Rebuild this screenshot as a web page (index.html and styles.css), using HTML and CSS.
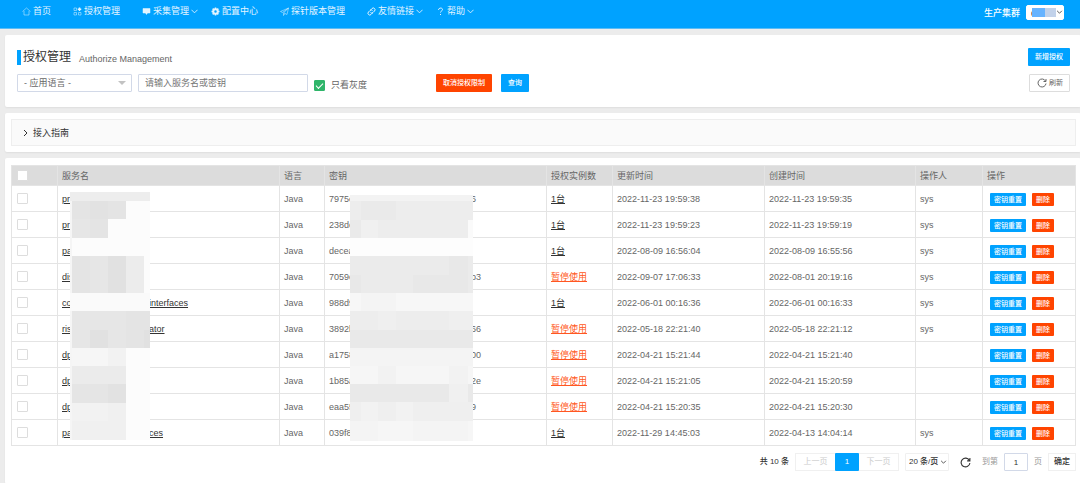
FILE: index.html
```
<!DOCTYPE html>
<html lang="zh-CN">
<head>
<meta charset="utf-8">
<title>授权管理</title>
<meta name="viewport" content="width=device-width, initial-scale=1">
<link rel="stylesheet" href="styles.css">
</head>
<body>
<header class="topbar">
  <nav class="nav">
    <a href="#"><svg class="icon" viewBox="0 0 18 18"><path d="M1 9 9 2l8 7M4 8v8h10V8"/></svg>首页</a>
    <a href="#"><svg class="icon" viewBox="0 0 18 18"><path d="M2 2h5v5H2zM2 11h5v5H2zM11 11h5v5h-5z"/><path class="strong" d="M13 1v7M9.500 4.500h7"/></svg>授权管理</a>
    <a href="#"><svg class="icon" viewBox="0 0 18 18"><path class="solid" d="M2 3h14v9h-5l-2 3-2-3H2z"/></svg>采集管理<svg class="caret" viewBox="0 0 16 10"><path d="m1 1 7 7 7-7"/></svg></a>
    <a href="#"><svg class="icon" viewBox="0 0 18 18"><circle class="gear" cx="9" cy="9" r="4.500"/><path class="strong" d="M9 1v3M9 14v3M1 9h3M14 9h3M3.300 3.300l2.200 2.200M12.500 12.500l2.200 2.200M3.300 14.700l2.200-2.200M12.500 5.500l2.200-2.200"/></svg>配置中心</a>
    <a href="#"><svg class="icon" viewBox="0 0 18 18"><path d="M17 2 1 9l4 2L17 2l-3 13-6-3M17 2 7 12v5l3-4"/></svg>探针版本管理</a>
    <a href="#"><svg class="icon" viewBox="0 0 18 18"><path class="medium" d="m7 6 3-3a3.500 3.500 0 0 1 5 5l-3 3a3.500 3.500 0 0 1-5 0M11 12l-3 3a3.500 3.500 0 0 1-5-5l3-3a3.500 3.500 0 0 1 5 0"/></svg>友情链接<svg class="caret" viewBox="0 0 16 10"><path d="m1 1 7 7 7-7"/></svg></a>
    <a href="#"><svg class="icon" viewBox="0 0 18 18"><path class="medium" d="M5 6c0-5 8-5 8-1 0 3-4 3-4 6M9 14v2"/></svg>帮助<svg class="caret" viewBox="0 0 16 10"><path d="m1 1 7 7 7-7"/></svg></a>
  </nav>
  <div class="cluster">
    <label for="cluster">生产集群</label>
    <span class="select-box cluster-box">
      <select id="cluster"><option>d</option></select>
      <svg class="mask" viewBox="0 0 24 10"><path fill="#66b3ff" d="M0 0h13v9H0z"/><path fill="#c2d2ea" d="M13 0h11v9H13z"/></svg>
      <svg class="arrow" viewBox="0 0 16 10"><path d="m2 2 6 6 6-6"/></svg>
    </span>
  </div>
</header>

<main class="page">
  <section class="card search-card">
    <div class="heading">
      <h1>授权管理</h1><small>Authorize Management</small>
      <button type="button" class="btn blue push">新增授权</button>
    </div>
    <form class="filters">
      <span class="select-box lang-box">
        <select aria-label="应用语言"><option>- 应用语言 -</option></select>
        <svg class="triangle" viewBox="0 0 8 4"><path d="M0 0h8L4 4z"/></svg>
      </span>
      <input class="keyword" type="text" aria-label="服务名或密钥" placeholder="请输入服务名或密钥">
      <label class="gray-only"><input type="checkbox" class="check" checked>只看灰度</label>
      <button type="button" class="btn red cancel">取消授权限制</button>
      <button type="button" class="btn blue">查询</button>
      <button type="button" class="btn plain push"><svg class="refresh" viewBox="0 0 20 20"><path d="M17 6a8 8 0 1 0 1 5M18 2v5h-5"/></svg>刷新</button>
    </form>
  </section>

  <section class="card guide-card">
    <button type="button" class="guide"><svg viewBox="0 0 10 16"><path d="m2 2 6 6-6 6"/></svg>接入指南</button>
  </section>

  <section class="card list-card">
    <table class="list">
      <colgroup><col class="c-check"><col class="c-name"><col class="c-lang"><col class="c-key"><col class="c-count"><col class="c-updated"><col class="c-created"><col class="c-user"><col class="c-actions"></colgroup>
      <thead>
        <tr><th><input type="checkbox" class="check" aria-label="全选"></th><th>服务名</th><th>语言</th><th>密钥</th><th>授权实例数</th><th>更新时间</th><th>创建时间</th><th>操作人</th><th>操作</th></tr>
      </thead>
      <tbody>
        <tr>
          <td><input type="checkbox" class="check" aria-label="选择"></td>
          <td class="masked"><a href="#">pr</a>
            <svg class="mosaic name-mosaic" viewBox="0 0 80 248" shape-rendering="crispEdges">
              <path fill="#fcfcfc" d="M0 0h80v248H0z"/>
              <path fill="#ededed" d="M0 0h80v9H0z"/>
              <path fill="#f5f5f5" d="M0 9h2v55H0zM0 64h2v37H0zM0 119h2v129H0z"/>
              <path fill="#e4e4e4" d="M2 9h18v18H2zM38 9h18v18H38z"/><path fill="#e2e2e2" d="M20 9h18v18H20z"/>
              <path fill="#e6e6e6" d="M2 27h18v19H2z"/><path fill="#e4e4e4" d="M20 27h18v19H20z"/>
              <path fill="#e4e4e4" d="M2 64h18v37H2z"/><path fill="#e6e6e6" d="M20 64h18v37H20z"/><path fill="#e1e1e1" d="M38 64h18v37H38z"/><path fill="#ececec" d="M56 64h18v37H56z"/>
              <path fill="#fafafa" d="M0 101h80v18H0z"/>
              <path fill="#e6e6e6" d="M2 119h54v37H2z"/><path fill="#e4e4e4" d="M56 119h24v37H56z"/><path fill="#e1e1e1" d="M20 138h18v18H20zM74 138h6v18h-6z"/>
              <path fill="#f6f6f6" d="M2 156h36v18H2z"/><path fill="#f2f2f2" d="M38 156h18v18H38z"/>
              <path fill="#ebebeb" d="M2 174h54v18H2z"/><path fill="#e5e5e5" d="M2 192h36v19H2z"/><path fill="#e2e2e2" d="M38 192h18v19H38z"/>
              <path fill="#f2f2f2" d="M2 211h36v18H2z"/><path fill="#f0f0f0" d="M38 211h18v18H38zM2 229h54v19H2z"/>
            </svg></td>
          <td>Java</td>
          <td class="masked"><span class="key-head">7975c</span>6
            <svg class="mosaic key-mosaic" viewBox="0 0 124 246" preserveAspectRatio="none" shape-rendering="crispEdges">
              <path fill="#f6f6f6" d="M0 0h124v246H0z"/>
              <path fill="#f3f3f3" d="M0 0h124v6H0z"/>
              <path fill="#ededed" d="M0 6h124v37H0z"/><path fill="#eaeaea" d="M11 6h35v19H11zM0 25h11v18H0z"/><path fill="#f0f0f0" d="M11 25h17v18H11z"/><path fill="#fafafa" d="M119 25h5v18h-5z"/>
              <path fill="#fdfdfd" d="M0 43h124v18H0z"/>
              <path fill="#ebebeb" d="M0 61h124v37H0z"/><path fill="#e8e8e8" d="M0 80h11v18H0zM64 80h36v18H64zM100 61h19v37h-19z"/>
              <path fill="#f7f7f7" d="M0 98h124v18H0z"/><path fill="#f4f4f4" d="M11 98h35v18H11z"/>
              <path fill="#efefef" d="M0 116h124v19H0z"/><path fill="#ededed" d="M0 116h28v19H0zM46 116h54v19H46z"/>
              <path fill="#e9e9e9" d="M0 135h124v18H0z"/>
              <path fill="#f4f4f4" d="M0 153h124v18H0z"/>
              <path fill="#f6f6f6" d="M0 171h124v18H0z"/><path fill="#f2f2f2" d="M28 171h18v18H28zM100 171h19v18h-19z"/>
              <path fill="#e9e9e9" d="M0 189h100v18H0zM119 189h5v18h-5z"/><path fill="#f0f0f0" d="M100 189h19v18h-19z"/>
              <path fill="#efefef" d="M0 207h124v19H0z"/><path fill="#f2f2f2" d="M11 207h17v19H11zM46 207h18v19H46z"/>
              <path fill="#f4f4f4" d="M0 226h28v20H0zM64 226h55v20H64z"/>
            </svg></td>
          <td><a href="#">1台</a></td><td>2022-11-23 19:59:38</td><td>2022-11-23 19:59:35</td><td>sys</td>
          <td><div class="ops"><button type="button" class="mini blue">密钥重置</button><button type="button" class="mini red">删除</button></div></td>
        </tr>
        <tr>
          <td><input type="checkbox" class="check" aria-label="选择"></td>
          <td><a href="#">pr</a></td><td>Java</td><td>238dc</td><td><a href="#">1台</a></td><td>2022-11-23 19:59:23</td><td>2022-11-23 19:59:19</td><td>sys</td>
          <td><div class="ops"><button type="button" class="mini blue">密钥重置</button><button type="button" class="mini red">删除</button></div></td>
        </tr>
        <tr>
          <td><input type="checkbox" class="check" aria-label="选择"></td>
          <td><a href="#">pa</a></td><td>Java</td><td>decea</td><td><a href="#">1台</a></td><td>2022-08-09 16:56:04</td><td>2022-08-09 16:55:56</td><td>sys</td>
          <td><div class="ops"><button type="button" class="mini blue">密钥重置</button><button type="button" class="mini red">删除</button></div></td>
        </tr>
        <tr>
          <td><input type="checkbox" class="check" aria-label="选择"></td>
          <td><a href="#">dis</a></td><td>Java</td><td><span class="key-head">7059c</span>b3</td><td><a href="#" class="paused">暂停使用</a></td><td>2022-09-07 17:06:33</td><td>2022-08-01 20:19:16</td><td>sys</td>
          <td><div class="ops"><button type="button" class="mini blue">密钥重置</button><button type="button" class="mini red">删除</button></div></td>
        </tr>
        <tr>
          <td><input type="checkbox" class="check" aria-label="选择"></td>
          <td><a href="#"><span class="name-head">co</span>interfaces</a></td><td>Java</td><td>988d9</td><td><a href="#">1台</a></td><td>2022-06-01 00:16:36</td><td>2022-06-01 00:16:33</td><td>sys</td>
          <td><div class="ops"><button type="button" class="mini blue">密钥重置</button><button type="button" class="mini red">删除</button></div></td>
        </tr>
        <tr>
          <td><input type="checkbox" class="check" aria-label="选择"></td>
          <td><a href="#"><span class="name-head">ris</span>ator</a></td><td>Java</td><td><span class="key-head">3892b</span>66</td><td><a href="#" class="paused">暂停使用</a></td><td>2022-05-18 22:21:40</td><td>2022-05-18 22:21:12</td><td>sys</td>
          <td><div class="ops"><button type="button" class="mini blue">密钥重置</button><button type="button" class="mini red">删除</button></div></td>
        </tr>
        <tr>
          <td><input type="checkbox" class="check" aria-label="选择"></td>
          <td><a href="#">dp</a></td><td>Java</td><td><span class="key-head">a1758</span>00</td><td><a href="#" class="paused">暂停使用</a></td><td>2022-04-21 15:21:44</td><td>2022-04-21 15:21:40</td><td></td>
          <td><div class="ops"><button type="button" class="mini blue">密钥重置</button><button type="button" class="mini red">删除</button></div></td>
        </tr>
        <tr>
          <td><input type="checkbox" class="check" aria-label="选择"></td>
          <td><a href="#">dp</a></td><td>Java</td><td><span class="key-head">1b85a</span>2e</td><td><a href="#" class="paused">暂停使用</a></td><td>2022-04-21 15:21:05</td><td>2022-04-21 15:20:59</td><td></td>
          <td><div class="ops"><button type="button" class="mini blue">密钥重置</button><button type="button" class="mini red">删除</button></div></td>
        </tr>
        <tr>
          <td><input type="checkbox" class="check" aria-label="选择"></td>
          <td><a href="#">dp</a></td><td>Java</td><td><span class="key-head">eaa55</span>9</td><td><a href="#" class="paused">暂停使用</a></td><td>2022-04-21 15:20:35</td><td>2022-04-21 15:20:30</td><td></td>
          <td><div class="ops"><button type="button" class="mini blue">密钥重置</button><button type="button" class="mini red">删除</button></div></td>
        </tr>
        <tr>
          <td><input type="checkbox" class="check" aria-label="选择"></td>
          <td><a href="#"><span class="name-head">pa</span>ces</a></td><td>Java</td><td>039f8</td><td><a href="#">1台</a></td><td>2022-11-29 14:45:03</td><td>2022-04-13 14:04:14</td><td>sys</td>
          <td><div class="ops"><button type="button" class="mini blue">密钥重置</button><button type="button" class="mini red">删除</button></div></td>
        </tr>
      </tbody>
    </table>

    <div class="pager">
      <span class="total">共 10 条</span>
      <div class="pages"><button type="button" disabled>上一页</button><button type="button" class="current">1</button><button type="button" disabled>下一页</button></div>
      <span class="select-box size-box">
        <select aria-label="每页条数"><option>20 条/页</option></select>
        <svg class="arrow" viewBox="0 0 16 10"><path d="m2 2 6 6 6-6"/></svg>
      </span>
      <button type="button" class="reload" aria-label="刷新"><svg class="refresh" viewBox="0 0 20 20"><path d="M17 6a8 8 0 1 0 1 5M18 2v5h-5"/></svg></button>
      <label class="jump">到第<input type="text" value="1">页</label>
      <button type="button" class="go">确定</button>
    </div>
  </section>
</main>
</body>
</html>
```
FILE: styles.css
```
* { box-sizing: border-box; }

body {
  margin: 0;
  background: #ececec;
  color: #666;
  font: 9px/12px "Liberation Sans", "Noto Sans CJK SC", sans-serif;
}

button, input, select { margin: 0; font: inherit; color: inherit; }
button { padding: 0; border: 0; cursor: pointer; white-space: nowrap; }
svg { flex: none; fill: none; stroke: currentColor; }
a { color: inherit; }

/* Top bar */
.topbar {
  display: flex;
  justify-content: space-between;
  align-items: flex-start;
  height: 29px;
  padding: 5px 16px 0 11px;
  background: #00a2ff;
  border-bottom: 1px solid #5cbcf5;
  color: #fff;
}
.nav { display: flex; }
.nav a {
  display: flex;
  align-items: center;
  gap: 2px;
  padding: 0 11px;
  color: #e3f4ff;
  text-decoration: none;
  white-space: nowrap;
}
.icon { width: 9px; height: 9px; stroke-width: 1; }
.icon .solid { fill: #e3f4ff; }
.icon .strong { stroke-width: 3; }
.icon .medium { stroke-width: 2; }
.icon .gear { stroke-width: 4; }
.caret { width: 7px; height: 5px; margin: 0 -9px 0 0; stroke-width: 2; }
.cluster { display: flex; align-items: center; gap: 6px; font-weight: 500; }

/* Selects */
.select-box { position: relative; display: flex; }
.select-box select {
  width: 100%;
  height: 18px;
  padding: 0 4px;
  border: 1px solid #e6e6e6;
  border-radius: 1px;
  background: #fff;
  appearance: none;
}
.select-box svg { position: absolute; pointer-events: none; }
.cluster-box { width: 38px; }
.cluster-box select { height: 15px; border-color: #fff; border-radius: 2px; color: #333; }
.cluster-box .mask { left: 6px; top: 3px; width: 24px; height: 10px; stroke: none; }
.arrow { right: 5px; top: 7px; width: 7px; height: 4px; stroke-width: 2; }
.cluster-box .arrow { right: 1px; top: 5px; color: #333; }
.triangle { right: 6px; top: 7px; width: 8px; height: 4px; stroke: none; }
.triangle path { fill: #c2c2c2; }

/* Cards */
.page { display: grid; gap: 6px; padding: 6px 0 0 5px; }
.card { background: #fff; border-radius: 2px; box-shadow: 0 1px 2px #0000000f; }
.search-card { padding: 13px 11px 15px 12px; }
.guide-card { padding: 6px 5px 6px 6px; }
.list-card { min-height: 326px; padding: 7px 5px 12px 6px; }

.heading { display: flex; align-items: center; }
.heading h1 {
  margin: 0;
  padding-left: 2px;
  border-left: 4px solid #00a2ff;
  color: #333;
  font-size: 12px;
  line-height: 15px;
  font-weight: 400;
}
.heading small { padding: 3px 0 0 8px; font-size: 9px; }
.push { margin-left: auto; }

.btn { height: 18px; padding: 0 7px; border-radius: 1px; font-size: 7px; font-weight: 500; }
.blue { background: #00a2ff; color: #fff; }
.red { background: #ff4400; color: #fff; }
.plain {
  display: flex;
  align-items: center;
  gap: 2px;
  padding: 0 6px 0 7px;
  border: 1px solid #ddd;
  background: #fff;
  color: #666;
  font-weight: 400;
}
.refresh { width: 10px; height: 10px; stroke-width: 2; }

.filters { display: flex; align-items: center; margin-top: 8px; }
.lang-box { width: 115px; }
.lang-box select, .keyword { padding: 0 6px; border-color: #d2d9e8; }
.keyword {
  width: 170px;
  height: 18px;
  margin: 0 6px;
  border: 1px solid #d2d9e8;
  border-radius: 1px;
  background: #fff;
}
.keyword::placeholder { color: #757575; opacity: 1; }
.gray-only { display: flex; align-items: center; gap: 6px; padding-top: 4px; }
.cancel { margin: 0 9px 0 69px; }

.check {
  display: block;
  flex: none;
  width: 11px;
  height: 11px;
  border: 1px solid #ddd;
  border-radius: 1px;
  background: #fff;
  appearance: none;
}
.check:checked { border-color: #2fb56a; background: #2fb56a; }
.check:checked::before {
  content: "";
  display: block;
  width: 6px;
  height: 3px;
  margin: 2px auto 0;
  border: solid #fff;
  border-width: 0 0 1px 1px;
  transform: rotate(-45deg);
}

.guide {
  display: flex;
  align-items: center;
  gap: 5px;
  width: 100%;
  height: 27px;
  padding-left: 11px;
  border: 1px solid #eee;
  background: #fafafa;
  color: #333;
}
.guide svg { width: 5px; height: 8px; stroke-width: 2; }

/* Table */
.list { width: 100%; table-layout: fixed; border-collapse: collapse; border: 1px solid #ddd; }
.c-check { width: 46px; }
.c-name, .c-key { width: 222px; }
.c-lang { width: 45px; }
.c-count { width: 66px; }
.c-updated { width: 152px; }
.c-created { width: 151px; }
.c-user { width: 67px; }
.c-actions { width: 93px; }
.list th, .list td {
  padding: 0 4px;
  border: 1px solid #e4e4e4;
  text-align: left;
  font-weight: 400;
  white-space: nowrap;
}
.list th { height: 20px; background: #dcdcdc; }
.list td { height: 26px; }
.list td a { color: #333; }
.list th:first-child, .list td:first-child { padding-left: 5px; }
.list td .paused { color: #ff5722; }
.name-head, .key-head { display: inline-block; }
.name-head { width: 87px; text-decoration: underline; }
.key-head { width: 142px; }
.masked { position: relative; }
.mosaic { position: absolute; z-index: 1; stroke: none; }
.name-mosaic { left: 12px; top: 6px; width: 80px; height: 248px; }
.key-mosaic { left: 25px; top: 9px; width: 123px; height: 246px; }
.ops { display: flex; gap: 6px; padding: 2px 0 0 3px; }
.mini { height: 13px; padding: 0 4px; border-radius: 1px; font-size: 7px; line-height: 13px; font-weight: 500; }

/* Pager */
.pager {
  display: flex;
  justify-content: flex-end;
  align-items: center;
  gap: 6px;
  margin-top: 7px;
  color: #333;
  font-size: 8px;
}
.pages { display: flex; border: 1px solid #f0f0f0; }
.pages button { width: 39px; height: 16px; background: #fff; color: #ccc; }
.pages .current { width: 24px; height: 18px; margin: -1px 0; border-radius: 1px; background: #00a2ff; color: #fff; }
.total, .size-box, .go { font-weight: 500; }
.size-box { width: 44px; }
.size-box select { border-color: #f0f0f0; padding: 0 3px; }
.size-box .arrow { right: 2px; }
.reload { display: flex; margin: 0 5px; background: none; }
.reload .refresh { width: 11px; height: 11px; }
.jump { display: flex; align-items: center; gap: 6px; color: #999; }
.jump input { width: 24px; height: 18px; padding: 0; border: 1px solid #d2d9e8; border-radius: 1px; background: #fff; color: #333; text-align: center; }
.go { width: 28px; height: 18px; border: 1px solid #f0f0f0; background: #fff; }
```
